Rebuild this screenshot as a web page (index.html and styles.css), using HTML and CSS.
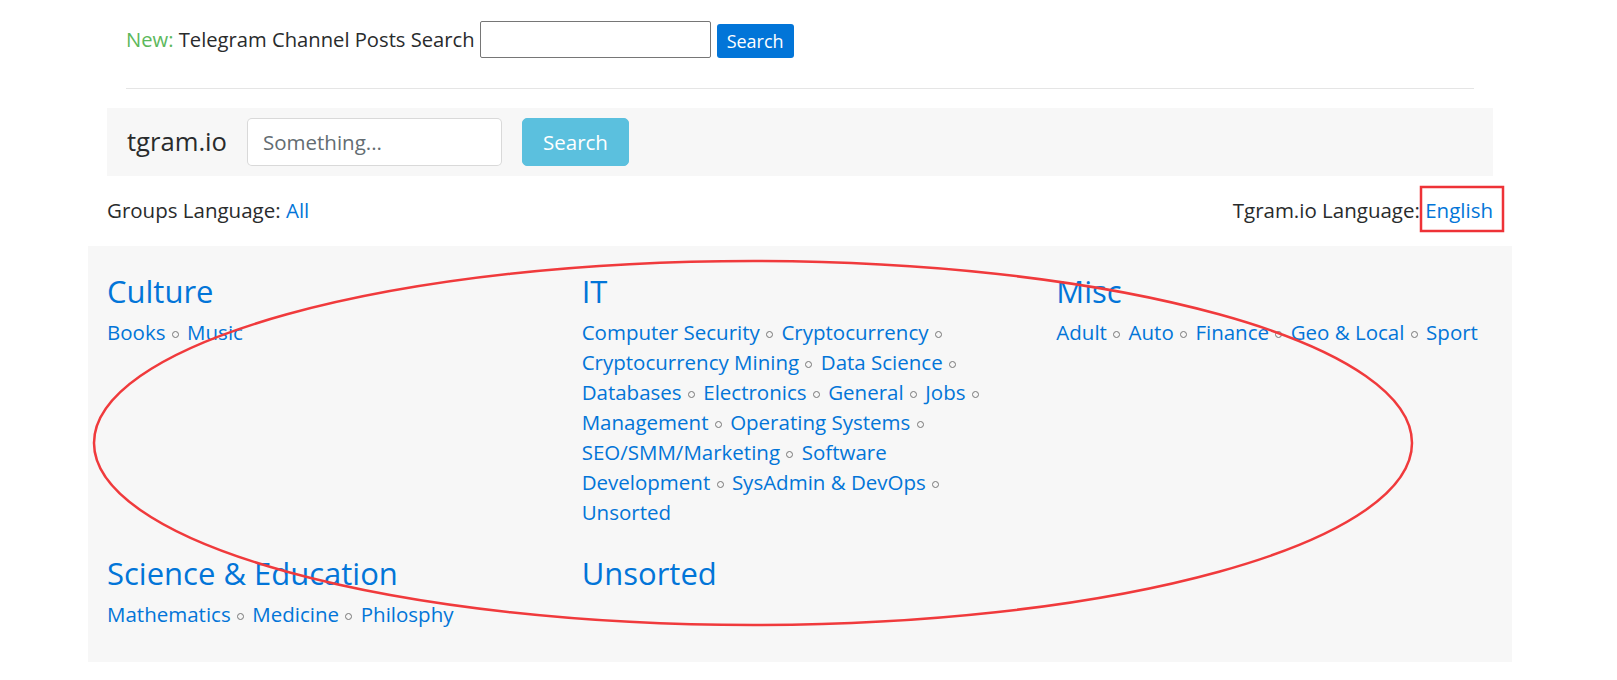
FILE: index.html
```html
<!DOCTYPE html>
<html lang="en">
<head>
    <meta charset="UTF-8">
    <meta name="viewport" content="width=device-width, initial-scale=1.0">
    <title>tgram.io - Telegram Groups</title>
    <link rel="stylesheet" href="styles.css">
</head>
<body>
    <div class="container">
        <div class="posts-search">
            <form class="posts-form">
                <span class="new">New:</span>&nbsp;Telegram Channel Posts Search
                <input type="text" class="posts-input">
                <button type="button" class="posts-btn">Search</button>
            </form>
            <hr>
        </div>

        <nav class="navbar">
            <a class="brand" href="#">tgram.io</a>
            <input type="text" class="nav-input" placeholder="Something...">
            <button type="button" class="btn-info">Search</button>
        </nav>

        <div class="lang-row">
            <div>Groups Language: <a href="#">All</a></div>
            <div>Tgram.io Language: <a href="#">English</a></div>
        </div>

        <div class="categories">
            <div class="category">
                <h4><a href="#">Culture</a></h4>
                <div class="links">
                    <a href="#">Books</a> <span class="sep"></span> <a href="#">Music</a>
                </div>
            </div>
            <div class="category">
                <h4><a href="#">IT</a></h4>
                <div class="links">
                    <a href="#">Computer Security</a> <span class="sep"></span>
                    <a href="#">Cryptocurrency</a> <span class="sep"></span>
                    <a href="#">Cryptocurrency Mining</a> <span class="sep"></span>
                    <a href="#">Data Science</a> <span class="sep"></span>
                    <a href="#">Databases</a> <span class="sep"></span>
                    <a href="#">Electronics</a> <span class="sep"></span>
                    <a href="#">General</a> <span class="sep"></span>
                    <a href="#">Jobs</a> <span class="sep"></span>
                    <a href="#">Management</a> <span class="sep"></span>
                    <a href="#">Operating Systems</a> <span class="sep"></span>
                    <a href="#">SEO/SMM/Marketing</a> <span class="sep"></span>
                    <a href="#">Software Development</a> <span class="sep"></span>
                    <a href="#">SysAdmin &amp; DevOps</a> <span class="sep"></span>
                    <a href="#">Unsorted</a>
                </div>
            </div>
            <div class="category">
                <h4><a href="#">Misc</a></h4>
                <div class="links">
                    <a href="#">Adult</a> <span class="sep"></span>
                    <a href="#">Auto</a> <span class="sep"></span>
                    <a href="#">Finance</a> <span class="sep"></span>
                    <a href="#">Geo &amp; Local</a> <span class="sep"></span>
                    <a href="#">Sport</a>
                </div>
            </div>
            <div class="category">
                <h4><a href="#">Science &amp; Education</a></h4>
                <div class="links">
                    <a href="#">Mathematics</a> <span class="sep"></span>
                    <a href="#">Medicine</a> <span class="sep"></span>
                    <a href="#">Philosphy</a>
                </div>
            </div>
            <div class="category">
                <h4><a href="#">Unsorted</a></h4>
            </div>
        </div>
    </div>

    <!-- пометки поверх страницы -->
    <svg class="marks" width="1617" height="680" viewBox="0 0 1617 680">
        <rect x="1421" y="187" width="82" height="44" fill="none" stroke="#ee3237" stroke-width="2.5"/>
        <ellipse cx="753" cy="443" rx="659" ry="182" fill="none" stroke="#f03a3c" stroke-width="2.5"/>
    </svg>
</body>
</html>
```

FILE: styles.css
```css
body {
    margin: 0;
    font-family: "Open Sans", "Noto Sans", sans-serif;
    font-size: 20.5px;
    line-height: 30px;
    color: #292b2c;
    background-color: #fff;
}
a {
    color: #0275d8;
    text-decoration: none;
}
.container {
    width: 1424px;
    margin: 0 88px;
}
.posts-search {
    margin: 0 38px;
    padding-top: 20px;
}
.posts-form {
    display: flex;
    align-items: center;
    height: 38px;
    font-size: 20.2px;
}
.new {
    color: #5cb85c;
}
.posts-input {
    width: 231px;
    height: 37px;
    box-sizing: border-box;
    margin: 0 6px 0 5px;
    border: 1px solid #767676;
    border-radius: 2px;
}
.posts-btn {
    margin-top: 4px;
    height: 34px;
    padding: 0 10px;
    background-color: #0275d8;
    color: white;
    border: none;
    border-radius: 3px;
    font-family: "Open Sans", sans-serif;
    font-size: 18px;
}
hr {
    margin: 30px 0 19px;
    border: none;
    border-top: 1px solid #e5e5e5;
}
.navbar {
    display: flex;
    align-items: center;
    margin: 0 19px;
    padding: 10px 20px;
    background-color: #f7f7f7;
}
.brand {
    color: #292b2c;
    font-size: 25.6px;
    margin-right: 20px;
}
.nav-input {
    width: 255px;
    height: 48px;
    box-sizing: border-box;
    padding: 0 15px;
    border: 1px solid rgba(0, 0, 0, 0.15);
    border-radius: 5px;
    font-family: "Open Sans", sans-serif;
    font-size: 20.5px;
    color: #464a4c;
}
.nav-input::placeholder {
    color: #636c72;
}
.btn-info {
    margin-left: 20px;
    height: 48px;
    padding: 0 20px;
    background-color: #5bc0de;
    border: 1px solid #5bc0de;
    border-radius: 5px;
    color: white;
    font-family: "Open Sans", sans-serif;
    font-size: 20.5px;
}
.lang-row {
    display: flex;
    justify-content: space-between;
    margin: 19px 19px 21px;
}
.categories {
    display: grid;
    grid-template-columns: repeat(3, 1fr);
    row-gap: 28px;
    padding: 27px 0 33px;
    background-color: #f7f7f7;
}
.category {
    padding: 0 19px;
}
.category h4 {
    margin: 0 0 8px;
    font-size: 31px;
    font-weight: normal;
    line-height: 36px;
}
.sep {
    display: inline-block;
    width: 7px;
    height: 7px;
    box-sizing: border-box;
    margin: 0 3px 0 1px;
    border: 1px solid #777;
    border-radius: 50%;
    vertical-align: middle;
}
.marks {
    position: absolute;
    top: 0;
    left: 0;
    pointer-events: none;
}
```
